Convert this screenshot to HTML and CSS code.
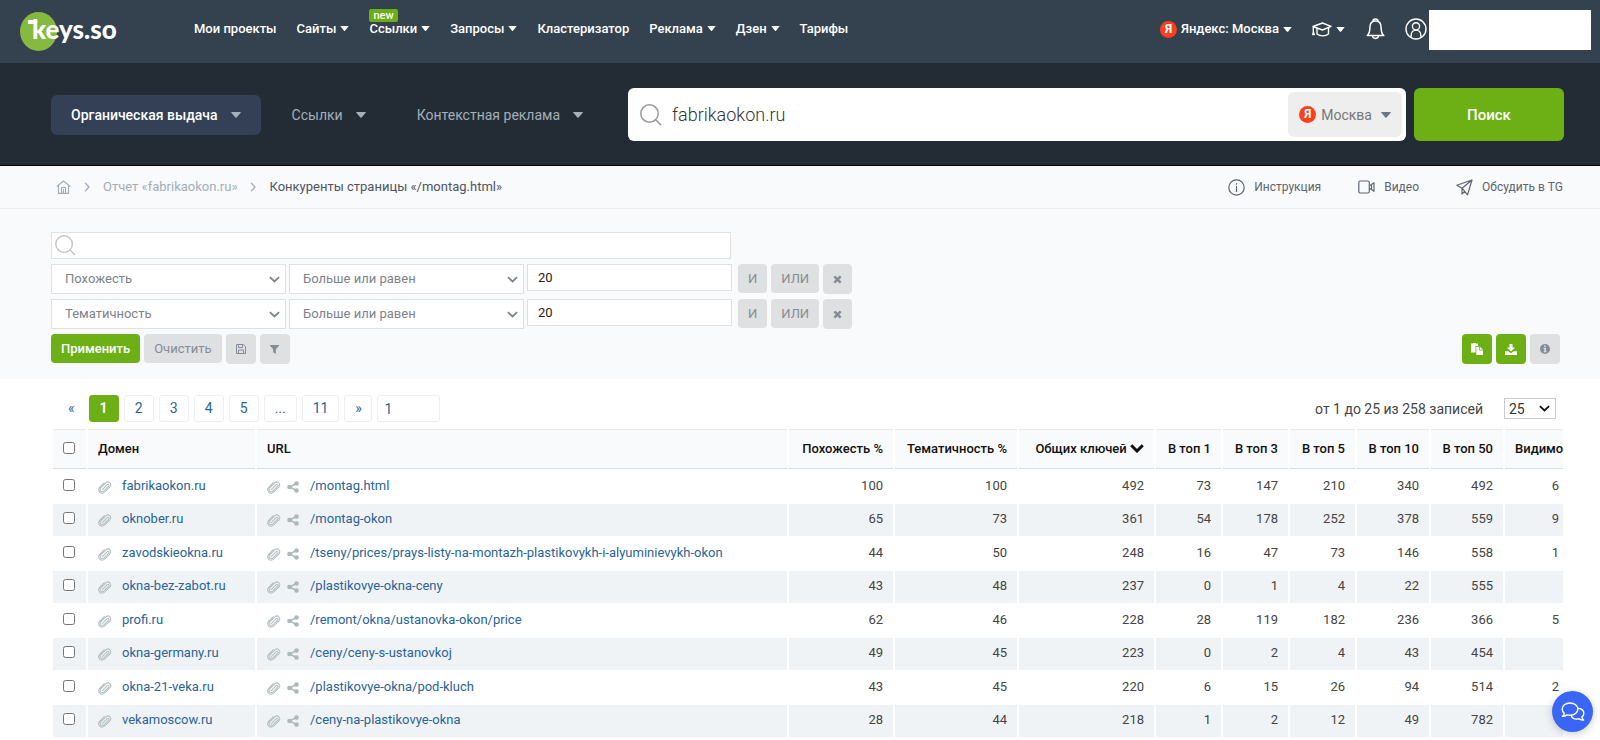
FILE: index.html
```html
<!DOCTYPE html>
<html lang="ru">
<head>
<meta charset="utf-8">
<title>Конкуренты страницы — keys.so</title>
<link rel="stylesheet" href="styles.css">
</head>
<body>
<svg class="sprite" aria-hidden="true">
  <symbol id="i-caret" viewBox="0 0 10 6"><path d="M.6 0h8.8q.7.1.3.7L5.600 5.600q-.6.5-1.200 0L.3.7Q0 .1.600 0z" fill="currentColor"/></symbol>
  <symbol id="i-chevron" viewBox="0 0 10 6"><path d="M.8.8 5 4.800 9.200.8" fill="none" stroke="currentColor" stroke-width="1.600"/></symbol>
  <symbol id="i-clip" viewBox="0 0 16 16"><path d="M4.600 11.200 10.500 5.300a1.200 1.200 0 0 1 1.700 1.700L6.600 12.600a2.400 2.400 0 0 1-3.500-3.500L9.300 2.900a3.300 3.300 0 0 1 4.600 4.600L7.400 14A3.900 3.900 0 0 1 1.900 8.400L7.200 3.100" fill="none" stroke="currentColor" stroke-width="1.200" stroke-linecap="round"/></symbol>
  <symbol id="i-share" viewBox="0 0 12 12"><path d="M9.500 2.500 2.500 6l7 3.500" fill="none" stroke="currentColor" stroke-width="1.400"/><circle cx="9.500" cy="2.500" r="2.300" fill="currentColor"/><circle cx="2.500" cy="6" r="2.300" fill="currentColor"/><circle cx="9.500" cy="9.500" r="2.300" fill="currentColor"/></symbol>
  <symbol id="i-search" viewBox="0 0 22 22"><circle cx="9.500" cy="9.500" r="8.700" fill="none" stroke="currentColor" stroke-width="1.500"/><path d="m16 16 5 5" stroke="currentColor" stroke-width="1.500"/></symbol>
  <symbol id="i-times" viewBox="0 0 10 10"><path d="m1.500 1.500 7 7m0-7-7 7" stroke="currentColor" stroke-width="2.800"/></symbol>
</svg>

<header class="topbar">
  <a class="logo" href="#"><span class="logo-text">keys.so</span></a>
  <nav class="nav">
    <a href="#">Мои проекты</a>
    <a href="#">Сайты<svg class="caret"><use href="#i-caret"/></svg></a>
    <a href="#" class="has-badge">Ссылки<svg class="caret"><use href="#i-caret"/></svg><span class="badge">new</span></a>
    <a href="#">Запросы<svg class="caret"><use href="#i-caret"/></svg></a>
    <a href="#">Кластеризатор</a>
    <a href="#">Реклама<svg class="caret"><use href="#i-caret"/></svg></a>
    <a href="#">Дзен<svg class="caret"><use href="#i-caret"/></svg></a>
    <a href="#">Тарифы</a>
  </nav>
  <div class="account">
    <button class="plain region"><span class="ya">Я</span>Яндекс: Москва<svg class="caret"><use href="#i-caret"/></svg></button>
    <button class="plain learn" aria-label="Обучение">
      <svg width="20" height="15" viewBox="0 0 20 15" fill="none" stroke="currentColor" stroke-width="1.400" stroke-linejoin="round" stroke-linecap="round"><path d="M1 4.500 10.500 1 19 4.300 10.500 8z"/><path d="M5 6.500v5.500c3 2.500 8.500 2.500 11.500 0V6M1.300 5v4.500M1.300 10l-.5 2.500h1.500z"/></svg>
      <svg class="caret"><use href="#i-caret"/></svg>
    </button>
    <button class="plain bell" aria-label="Уведомления">
      <svg width="19" height="22" viewBox="0 0 19 22" fill="none" stroke="currentColor" stroke-width="1.500" stroke-linejoin="round"><path d="M6.800 3.400C7 .3 12 .3 12.200 3.400M1.200 17.500c2-1.600 2.700-3 2.700-8 0-4 2.200-6.500 5.600-6.500s5.600 2.500 5.600 6.500c0 5 .7 6.400 2.700 8z"/><path d="M6.500 17.800c.3 3.500 5.700 3.500 6 0"/></svg>
    </button>
    <button class="plain user" aria-label="Профиль">
      <svg width="22" height="22" viewBox="0 0 22 22" fill="none" stroke="currentColor" stroke-width="1.400"><circle cx="11" cy="11" r="10"/><circle cx="11" cy="8.300" r="3.600"/><path d="M6.200 18.800v-1.500c0-3 2-5.200 4.800-5.200s4.800 2.200 4.800 5.200v1.500"/></svg>
    </button>
    <div class="account-name"></div>
  </div>
</header>

<section class="hero">
  <nav class="tabs">
    <button class="tab active">Органическая выдача<svg class="caret"><use href="#i-caret"/></svg></button>
    <button class="tab">Ссылки<svg class="caret"><use href="#i-caret"/></svg></button>
    <button class="tab">Контекстная реклама<svg class="caret"><use href="#i-caret"/></svg></button>
  </nav>
  <form class="search">
    <div class="search-box">
      <svg width="22" height="22"><use href="#i-search"/></svg>
      <input type="text" value="fabrikaokon.ru" aria-label="Домен">
      <button type="button" class="city"><span class="ya">Я</span>Москва<svg class="caret"><use href="#i-caret"/></svg></button>
    </div>
    <button type="button" class="find">Поиск</button>
  </form>
</section>

<section class="crumbs">
  <nav class="path">
    <a href="#" aria-label="Главная"><svg width="15" height="14" viewBox="0 0 15 14" fill="none" stroke="currentColor" stroke-width="1.100"><path d="M.8 6.500 7.500 1l6.700 5.500M2.500 5.500v7.900h10V5.500M5.500 13V7.500h4V13M7.500 13V9"/></svg></a>
    <svg class="sep" viewBox="0 0 6 10"><path d="m1 .8 4 4.200-4 4.200" fill="none" stroke="currentColor" stroke-width="1.300"/></svg>
    <a href="#">Отчет «fabrikaokon.ru»</a>
    <svg class="sep" viewBox="0 0 6 10"><path d="m1 .8 4 4.200-4 4.200" fill="none" stroke="currentColor" stroke-width="1.300"/></svg>
    <span class="here">Конкуренты страницы «/montag.html»</span>
  </nav>
  <div class="help">
    <a href="#"><svg width="17" height="17" viewBox="0 0 17 17" fill="none" stroke="currentColor" stroke-width="1.200"><circle cx="8.500" cy="8.500" r="7.700"/><path d="M8.500 7v6M8.500 4.200v1.500"/></svg>Инструкция</a>
    <a href="#"><svg width="17" height="14" viewBox="0 0 17 14" fill="none" stroke="currentColor" stroke-width="1.200" stroke-linejoin="round"><rect x=".8" y="1" width="10.500" height="12" rx="1.500"/><path d="m11.500 5.500 2-1V9.500l-2-1M13.500 4.500l2.500-1.700v8.400l-2.500-1.700"/></svg>Видео</a>
    <a href="#"><svg width="17" height="17" viewBox="0 0 17 17" fill="none" stroke="currentColor" stroke-width="1.200" stroke-linejoin="round"><path d="M16 1 .8 6.200 6 9.200 11.500 15.800zM16 1 6 9.200V15l2.600-2.700"/></svg>Обсудить в TG</a>
  </div>
</section>

<main>
  <section class="filters">
    <label class="filter-search"><svg width="21" height="21"><use href="#i-search"/></svg><input type="text" aria-label="Поиск по таблице"></label>
    <div class="rule">
      <span class="pick"><select aria-label="Показатель"><option>Похожесть</option></select><svg><use href="#i-chevron"/></svg></span>
      <span class="pick"><select aria-label="Условие"><option>Больше или равен</option></select><svg><use href="#i-chevron"/></svg></span>
      <input class="value" type="text" value="20" aria-label="Значение">
      <div class="logic"><button class="btn">И</button><button class="btn">ИЛИ</button><button class="btn icon" aria-label="Удалить"><svg width="9" height="9"><use href="#i-times"/></svg></button></div>
    </div>
    <div class="rule">
      <span class="pick"><select aria-label="Показатель"><option>Тематичность</option></select><svg><use href="#i-chevron"/></svg></span>
      <span class="pick"><select aria-label="Условие"><option>Больше или равен</option></select><svg><use href="#i-chevron"/></svg></span>
      <input class="value" type="text" value="20" aria-label="Значение">
      <div class="logic"><button class="btn">И</button><button class="btn">ИЛИ</button><button class="btn icon" aria-label="Удалить"><svg width="9" height="9"><use href="#i-times"/></svg></button></div>
    </div>
    <div class="actions">
      <button class="btn green apply">Применить</button>
      <button class="btn">Очистить</button>
      <button class="btn icon" aria-label="Сохранить"><svg width="10" height="10" viewBox="0 0 10 10" fill="none" stroke="currentColor"><path d="M.5.5H7.500l2 2v7H.5zM2.500 9.500V6h5v3.500M2.500.5v3h4v-3"/></svg></button>
      <button class="btn icon" aria-label="Фильтр"><svg width="9" height="9" viewBox="0 0 9 9"><path d="M0 0h9v.8L5.800 4.200V9L3.200 7.200v-3L0 .8z" fill="currentColor"/></svg></button>
      <span class="grow"></span>
      <button class="btn green icon" aria-label="Копировать"><svg width="12" height="12" viewBox="0 0 12 12"><path d="M0 .5h2V0h3v.5h2V3H4.500v6.500H0z" fill="#fff"/><path d="M5.300 3.800h3V7.500h3.700V12H5.300z" fill="#fff"/><path d="M9 3.800 12 6.800H9z" fill="#fff"/></svg></button>
      <button class="btn green icon" aria-label="Скачать"><svg width="12" height="11" viewBox="0 0 12 11"><path d="M4.500 0h3v3.500H10L6 7.500 2 3.500h2.500zM0 7.200h3.200L6 9.300l2.800-2.100H12V11H0z" fill="#fff"/></svg></button>
      <button class="btn icon" aria-label="Информация"><svg width="10" height="10" viewBox="0 0 10 10"><circle cx="5" cy="5" r="5" fill="currentColor"/><path d="M4.100 1.500h1.800v1.300H4.100zM3.600 3.800h2.300v3.400h.7v1.100h-3V7.200h.7V4.900h-.7z" fill="#dee0e2"/></svg></button>
    </div>
  </section>

  <section class="results">
    <div class="pager">
      <nav class="pages">
        <a class="page prev" href="#">«</a><a class="page current" href="#">1</a><a class="page" href="#">2</a><a class="page" href="#">3</a><a class="page" href="#">4</a><a class="page" href="#">5</a><a class="page" href="#">...</a><a class="page" href="#">11</a><a class="page next" href="#">»</a>
        <input class="goto" type="text" value="1" aria-label="Номер страницы">
      </nav>
      <span class="count">от 1 до 25 из 258 записей</span>
      <span class="pick size"><select aria-label="Записей на странице"><option>25</option></select><svg><use href="#i-chevron"/></svg></span>
    </div>
    <table>
      <colgroup><col class="c-check"><col class="c-domain"><col><col class="c-sim"><col class="c-theme"><col class="c-keys"><col class="c-top"><col class="c-top"><col class="c-top"><col class="c-top2"><col class="c-top2"><col class="c-vis"></colgroup>
      <thead><tr><th class="l"><input type="checkbox" aria-label="Выбрать все"></th><th class="l">Домен</th><th class="l">URL</th><th>Похожесть %</th><th>Тематичность %</th><th>Общих ключей <svg class="sort" viewBox="0 0 14 9"><path d="M1.200 1.200 7 7l5.800-5.800" fill="none" stroke="currentColor" stroke-width="3"/></svg></th><th>В топ 1</th><th>В топ 3</th><th>В топ 5</th><th>В топ 10</th><th>В топ 50</th><th class="edge l">Видимо</th></tr></thead>
      <tbody>
        <tr><td class="l"><input type="checkbox" aria-label="fabrikaokon.ru"></td><td class="l"><span class="cell"><svg class="clip"><use href="#i-clip"/></svg><a href="#">fabrikaokon.ru</a></span></td><td class="l"><span class="cell"><svg class="clip"><use href="#i-clip"/></svg><svg class="share"><use href="#i-share"/></svg><a href="#">/montag.html</a></span></td><td>100</td><td>100</td><td>492</td><td>73</td><td>147</td><td>210</td><td>340</td><td>492</td><td class="edge">6</td></tr>
        <tr><td class="l"><input type="checkbox" aria-label="oknober.ru"></td><td class="l"><span class="cell"><svg class="clip"><use href="#i-clip"/></svg><a href="#">oknober.ru</a></span></td><td class="l"><span class="cell"><svg class="clip"><use href="#i-clip"/></svg><svg class="share"><use href="#i-share"/></svg><a href="#">/montag-okon</a></span></td><td>65</td><td>73</td><td>361</td><td>54</td><td>178</td><td>252</td><td>378</td><td>559</td><td class="edge">9</td></tr>
        <tr><td class="l"><input type="checkbox" aria-label="zavodskieokna.ru"></td><td class="l"><span class="cell"><svg class="clip"><use href="#i-clip"/></svg><a href="#">zavodskieokna.ru</a></span></td><td class="l"><span class="cell"><svg class="clip"><use href="#i-clip"/></svg><svg class="share"><use href="#i-share"/></svg><a href="#">/tseny/prices/prays-listy-na-montazh-plastikovykh-i-alyuminievykh-okon</a></span></td><td>44</td><td>50</td><td>248</td><td>16</td><td>47</td><td>73</td><td>146</td><td>558</td><td class="edge">1</td></tr>
        <tr><td class="l"><input type="checkbox" aria-label="okna-bez-zabot.ru"></td><td class="l"><span class="cell"><svg class="clip"><use href="#i-clip"/></svg><a href="#">okna-bez-zabot.ru</a></span></td><td class="l"><span class="cell"><svg class="clip"><use href="#i-clip"/></svg><svg class="share"><use href="#i-share"/></svg><a href="#">/plastikovye-okna-ceny</a></span></td><td>43</td><td>48</td><td>237</td><td>0</td><td>1</td><td>4</td><td>22</td><td>555</td><td class="edge"></td></tr>
        <tr><td class="l"><input type="checkbox" aria-label="profi.ru"></td><td class="l"><span class="cell"><svg class="clip"><use href="#i-clip"/></svg><a href="#">profi.ru</a></span></td><td class="l"><span class="cell"><svg class="clip"><use href="#i-clip"/></svg><svg class="share"><use href="#i-share"/></svg><a href="#">/remont/okna/ustanovka-okon/price</a></span></td><td>62</td><td>46</td><td>228</td><td>28</td><td>119</td><td>182</td><td>236</td><td>366</td><td class="edge">5</td></tr>
        <tr><td class="l"><input type="checkbox" aria-label="okna-germany.ru"></td><td class="l"><span class="cell"><svg class="clip"><use href="#i-clip"/></svg><a href="#">okna-germany.ru</a></span></td><td class="l"><span class="cell"><svg class="clip"><use href="#i-clip"/></svg><svg class="share"><use href="#i-share"/></svg><a href="#">/ceny/ceny-s-ustanovkoj</a></span></td><td>49</td><td>45</td><td>223</td><td>0</td><td>2</td><td>4</td><td>43</td><td>454</td><td class="edge"></td></tr>
        <tr><td class="l"><input type="checkbox" aria-label="okna-21-veka.ru"></td><td class="l"><span class="cell"><svg class="clip"><use href="#i-clip"/></svg><a href="#">okna-21-veka.ru</a></span></td><td class="l"><span class="cell"><svg class="clip"><use href="#i-clip"/></svg><svg class="share"><use href="#i-share"/></svg><a href="#">/plastikovye-okna/pod-kluch</a></span></td><td>43</td><td>45</td><td>220</td><td>6</td><td>15</td><td>26</td><td>94</td><td>514</td><td class="edge">2</td></tr>
        <tr><td class="l"><input type="checkbox" aria-label="vekamoscow.ru"></td><td class="l"><span class="cell"><svg class="clip"><use href="#i-clip"/></svg><a href="#">vekamoscow.ru</a></span></td><td class="l"><span class="cell"><svg class="clip"><use href="#i-clip"/></svg><svg class="share"><use href="#i-share"/></svg><a href="#">/ceny-na-plastikovye-okna</a></span></td><td>28</td><td>44</td><td>218</td><td>1</td><td>2</td><td>12</td><td>49</td><td>782</td><td class="edge"></td></tr>
      </tbody>
    </table>
  </section>
</main>

<button class="chat" aria-label="Чат">
  <svg width="24" height="20" viewBox="0 0 24 20" fill="none" stroke="#fff" stroke-width="1.400" stroke-linejoin="round"><path d="M9 1C4.500 1 1.200 3.600 1.200 7c0 1.800.8 3.200 2 4.300-.2 1.300-.9 2.300-1.800 3 1.700.1 3.300-.4 4.500-1.400 1 .3 2 .4 3.100.4 4.500 0 7.900-2.800 7.900-6.200S13.500 1 9 1z"/><path d="M17 6.200c3.300.4 5.800 2.500 5.800 5.100 0 1.500-.7 2.800-1.900 3.800.2 1.300.8 2.300 1.700 3-1.600.1-3.100-.4-4.400-1.300-4 .9-7.200-.7-8.200-3.500"/></svg>
</button>
</body>
</html>
```
FILE: styles.css
```css
* { box-sizing: border-box; }
body {
  margin: 0;
  background: #fff;
  color: #333;
  font: 13px/20px Roboto, "Liberation Sans", sans-serif;
}
a { color: inherit; text-decoration: none; }
button, input, select { font: inherit; color: inherit; margin: 0; }
button { border: 0; cursor: pointer; white-space: nowrap; }
svg { display: block; flex: none; }
.sprite { position: absolute; width: 0; height: 0; }
.caret { width: 9px; height: 5px; }
.ya {
  display: inline-flex;
  align-items: center;
  justify-content: center;
  width: 17px;
  height: 17px;
  border-radius: 50%;
  background: #fc3f1d;
  color: #fff;
  font-size: 12px;
  font-weight: 700;
  line-height: 17px;
}

/* Top bar */
.topbar {
  display: flex;
  align-items: center;
  height: 63px;
  padding: 0 9px 0 20px;
  background: #34414f;
  color: #fff;
  font-weight: 500;
}
.logo { position: relative; width: 174px; height: 40px; padding-left: 12px; }
.logo::before {
  content: "";
  position: absolute;
  left: 0;
  top: 0;
  width: 37px;
  height: 39px;
  border-radius: 50%;
  background: #85b940;
}
.logo::after {
  content: "";
  position: absolute;
  left: 8px;
  top: 8px;
  width: 7px;
  height: 4px;
  background: #fff;
}
.logo-text { position: relative; font: 900 26px/34px Lato, sans-serif; }
.nav { display: flex; gap: 20px; padding-bottom: 6px; }
.nav a { display: flex; align-items: center; gap: 4px; }
.has-badge { position: relative; }
.badge {
  position: absolute;
  left: 0;
  top: -10px;
  padding: 0 4px;
  border-radius: 2px;
  background: #6bae15;
  font-size: 11px;
  line-height: 13px;
}
.account { display: flex; align-items: center; margin-left: auto; }
.plain { display: flex; align-items: center; gap: 4px; padding: 0; margin-bottom: 5px; background: none; }
.learn, .user { margin-left: 20px; }
.bell { margin-left: 21px; }
.account-name { width: 162px; height: 40px; margin: 0 0 3px 2px; background: #fff; }

/* Search panel */
.hero {
  display: flex;
  align-items: center;
  gap: 25px;
  height: 103px;
  padding: 1px 36px 0 51px;
  border-bottom: 1px solid #000;
  background: #232c34;
}
.tabs { display: flex; gap: 11px; }
.tab {
  display: flex;
  align-items: center;
  gap: 13px;
  height: 40px;
  padding: 0 20px;
  border-radius: 6px;
  background: none;
  color: #a4afba;
  font-size: 14px;
}
.tab .caret, .city .caret { width: 10px; height: 6px; }
.tab.active { background: #334055; color: #fff; font-weight: 500; }
.tab.active .caret { color: #a4afba; }
.search { display: flex; flex: 1; gap: 8px; }
.search-box {
  display: flex;
  flex: 1;
  align-items: center;
  gap: 10px;
  height: 53px;
  padding: 4px 4px 4px 12px;
  border-radius: 6px;
  background: #fff;
  color: #999;
}
.search-box input {
  flex: 1;
  min-width: 0;
  border: 0;
  padding: 0;
  outline: 0;
  color: #333;
  font-size: 18px;
  font-weight: 300;
}
.city {
  display: flex;
  align-items: center;
  gap: 5px;
  height: 45px;
  padding: 0 11px;
  border-radius: 6px;
  background: #eee;
  color: #777;
  font-size: 14px;
}
.city .caret { margin-left: 4px; color: #6b7684; }
.find {
  width: 150px;
  border-radius: 6px;
  background: #6cb016;
  color: #fff;
  font-size: 15px;
  font-weight: 500;
}

/* Breadcrumbs */
.crumbs {
  display: flex;
  align-items: center;
  justify-content: space-between;
  height: 43px;
  padding: 0 37px 0 56px;
  border-bottom: 1px solid #eceeef;
  background: #f9fafc;
}
.path { display: flex; align-items: center; gap: 13px; color: #a3adb8; }
.sep { width: 6px; height: 10px; }
.here { color: #4d5560; }
.help { display: flex; gap: 37px; color: #5c6570; font-size: 12px; }
.help a { display: flex; align-items: center; gap: 9px; }

/* Filters */
.filters {
  display: flex;
  flex-direction: column;
  gap: 5px;
  padding: 23px 40px 15px 51px;
  background: #f9fafc;
}
.filter-search {
  display: flex;
  align-items: center;
  width: 680px;
  height: 27px;
  padding: 0 3px;
  border: 1px solid #dfe0e2;
  background: #fff;
  color: #c2c5c8;
}
.filter-search input { flex: 1; border: 0; outline: 0; background: none; }
.rule { display: flex; gap: 3px; height: 30px; }
.pick { display: grid; align-items: center; }
.pick > * { grid-area: 1 / 1; }
.pick svg { justify-self: end; width: 11px; height: 7px; margin-right: 6px; pointer-events: none; }
.pick select {
  appearance: none;
  width: 235px;
  height: 30px;
  padding: 0 13px;
  border: 1px solid #dfe0e2;
  border-radius: 0;
  background: #fff;
}
.rule .pick { color: #7d838a; }
.value { width: 205px; height: 27px; padding: 0 10px; border: 1px solid #dfe0e2; color: #222; }
.logic { display: flex; gap: 4px; margin-left: 3px; }
.btn {
  display: flex;
  align-items: center;
  justify-content: center;
  height: 29px;
  padding: 0 10px;
  border-radius: 4px;
  background: #dee0e2;
  color: #868c93;
}
.btn.icon { width: 30px; height: 30px; padding: 0; }
.logic .btn.icon { width: 29px; }
.btn.green { background: #6cb016; color: #fff; }
.apply { font-weight: 500; }
.actions { display: flex; gap: 4px; height: 30px; }
.grow { flex: 1; }

/* Pager */
.results { padding: 16px 35px 0 51px; }
.pager { display: flex; align-items: center; padding-right: 9px; font-size: 14px; }
.pages { display: flex; gap: 5px; color: #2a6496; }
.page {
  min-width: 30px;
  height: 27px;
  padding: 0 10px;
  border: 1px solid #edeff5;
  border-radius: 3px;
  text-align: center;
  line-height: 25px;
}
.page.prev { padding: 0 8px 0 16px; border-color: transparent; }
.page.current { border-color: #6cb016; background: #6cb016; color: #fff; font-weight: 700; }
.page.next { min-width: 28px; padding: 0 9px; }
.goto { width: 63px; height: 27px; padding: 0 6px; border: 1px solid #edeff5; border-radius: 3px; }
.count { margin-left: auto; color: #444; }
.pick.size { margin-left: 21px; }
.size select { width: 52px; height: 21px; padding: 0 4px; border-color: #ccc9d2; }
.size svg { color: #111; }

/* Table */
table { width: 100%; table-layout: fixed; border-spacing: 2px; margin-top: 5px; }
.c-check { width: 33px; }
.c-domain { width: 167px; }
.c-sim { width: 104px; }
.c-theme { width: 122px; }
.c-keys { width: 135px; }
.c-top { width: 65px; }
.c-top2 { width: 72px; }
.c-vis { width: 58px; }
th, td { padding: 0 10px; text-align: right; white-space: nowrap; }
th {
  height: 40px;
  border-top: 1px solid #e9ebed;
  border-bottom: 1px solid #d9dce0;
  background: #f9fafc;
  color: #111;
  font-weight: 500;
}
td { height: 31px; padding-bottom: 2px; color: #444; line-height: 18px; }
tr:nth-child(even) td { height: 32px; background: #f0f3f6; }
.l { text-align: left; }
.edge { padding-right: 4px; }
th.edge { padding-right: 0; }
th input, td input { display: block; width: 12px; height: 12px; margin-bottom: 2px; }
.sort { display: inline-block; width: 14px; height: 9px; }
.cell { display: flex; align-items: center; color: #2a6496; }
.cell svg { margin-top: 2px; }
.clip { width: 14px; height: 14px; margin-right: 10px; color: #b4bfc0; }
.share { width: 12px; height: 12px; margin: 0 11px 0 -4px; color: #adb8b8; }

.chat {
  position: fixed;
  right: 7px;
  bottom: 8px;
  display: grid;
  place-items: center;
  width: 41px;
  height: 41px;
  padding: 0;
  border-radius: 50%;
  background: #3a66f5;
  box-shadow: 0 2px 8px rgba(0, 0, 0, .2);
}
```
